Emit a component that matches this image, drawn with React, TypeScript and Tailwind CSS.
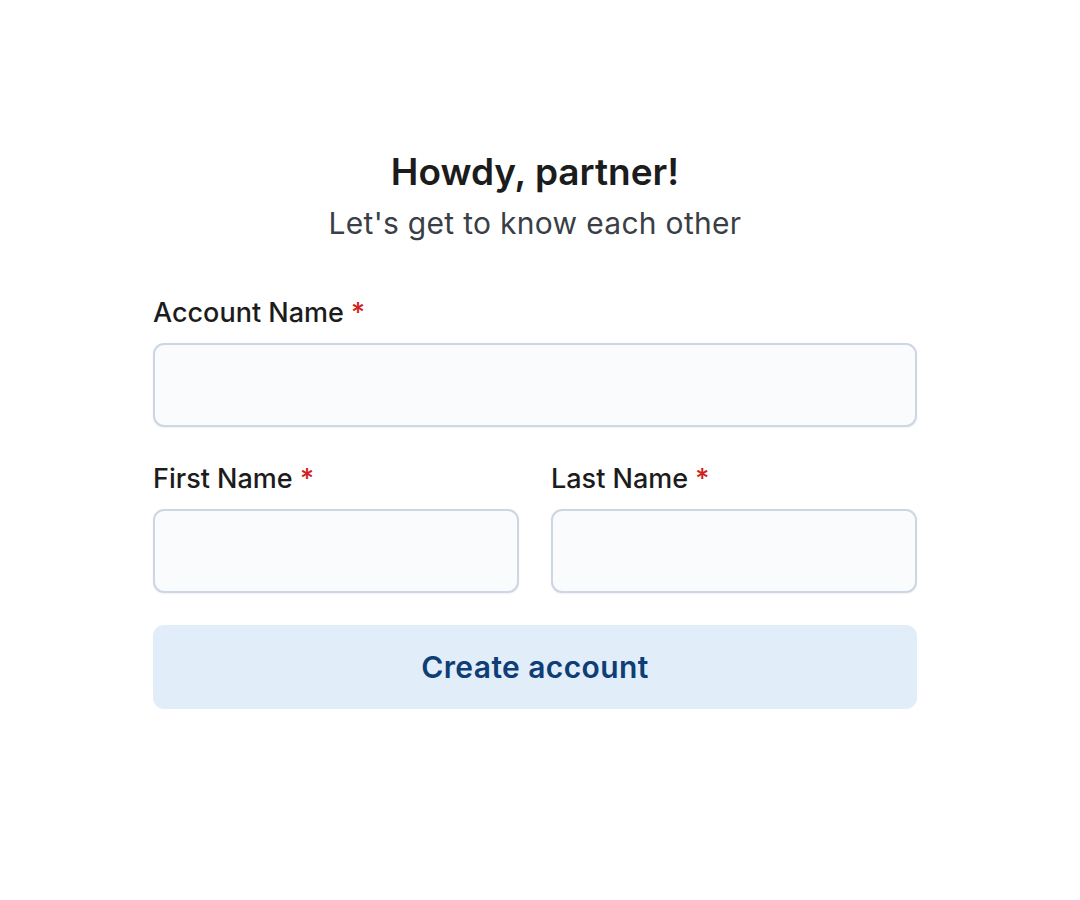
export default function App() {
  return (
    <div className="min-h-screen bg-white font-['Inter','Liberation_Sans',sans-serif]">
      <div className="ml-[153px] w-[764px] pt-[149px]">
        {/* heading */}
        <div className="flex flex-col items-center">
          <h1 className="text-[37px] leading-[46px] font-semibold text-[#1c1c1c]">Howdy, partner!</h1>
          <p className="mt-[9px] text-[30px] leading-[38px] tracking-[0.3px] text-[#3a3f47]">Let&apos;s get to know each other</p>
        </div>

        <form className="mt-[55px] flex flex-col" onSubmit={(e) => e.preventDefault()}>
          <Field label="Account Name" />

          <div className="mt-[36px] grid grid-cols-2 gap-[32px]">
            <Field label="First Name" />
            <Field label="Last Name" />
          </div>

          <button
            type="submit"
            className="mt-[32px] h-[84px] w-full rounded-[11px] bg-[#e1eefa] text-[30px] tracking-[0.4px] font-semibold text-[#0f3d75]"
          >
            Create account
          </button>
        </form>
      </div>
    </div>
  )
}

function Field({ label }: { label: string }) {
  return (
    <label className="flex flex-col">
      <span className="text-[27px] leading-[32px] font-medium text-[#1c1c1c]">
        {label} <span className="text-[#d32020]">*</span>
      </span>
      <input
        type="text"
        className="mt-[14px] h-[84px] w-full rounded-[11px] border-2 border-[#cdd7e4] bg-[#f9fbfd] px-4 text-[26px] shadow-[0_1px_2px_rgba(15,23,42,0.06)] outline-none"
      />
    </label>
  )
}
